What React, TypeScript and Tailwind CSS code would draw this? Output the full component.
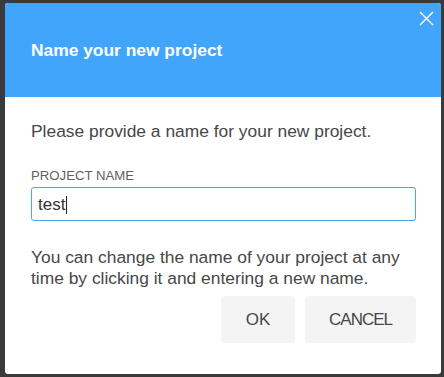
import React from "react";

export default function App() {
  return (
    <div
      className="w-[444px] h-[377px] bg-[#3a3a3a] pl-[5px] pt-[3px] overflow-hidden"
      style={{ fontFamily: '"Liberation Sans", Arial, sans-serif' }}
    >
      <div className="w-[436px] h-[371px] bg-white rounded-[3px] overflow-hidden flex flex-col">
        <div className="relative h-[94px] bg-[#42a5fc] flex items-center pl-[26px] shrink-0">
          <h1 className="text-white font-bold text-[17.4px] leading-[22px] -mt-[1px]">Name your new project</h1>
          <button className="absolute top-[8px] right-[7px] w-[15px] h-[15px] flex items-center justify-center">
            <svg width="15" height="15" viewBox="0 0 15 15" fill="none">
              <path d="M1 1L14 14M14 1L1 14" stroke="white" strokeWidth="1.4" />
            </svg>
          </button>
        </div>
        <div className="flex flex-col pl-[26px] pr-[25px] text-[#474747]">
          <p className="mt-[24px] text-[17.4px] leading-[21px]">Please provide a name for your new project.</p>
          <label className="mt-[26px] text-[13.2px] leading-[16px] text-[#5f5f5f] uppercase">Project name</label>
          <div className="mt-[3px] h-[34px] border border-[#4aa3f0] rounded-[3px] flex items-center pl-[6px] pt-[1px] text-[17px] text-[#333]">
            <span>test</span>
            <span className="w-[1px] h-[18px] bg-[#222] ml-[1px]" />
          </div>
          <p className="mt-[26px] text-[17.4px] leading-[21px]">
            You can change the name of your project at any time by clicking it and entering a new name.
          </p>
          <div className="mt-[7px] flex justify-end gap-[10px]">
            <button className="w-[74px] h-[47px] bg-[#f4f4f4] rounded-[4px] text-[17px] text-[#474747]">OK</button>
            <button className="w-[111px] h-[47px] bg-[#f4f4f4] rounded-[4px] text-[17px] text-[#474747] tracking-[-1px]">CANCEL</button>
          </div>
        </div>
      </div>
    </div>
  );
}
